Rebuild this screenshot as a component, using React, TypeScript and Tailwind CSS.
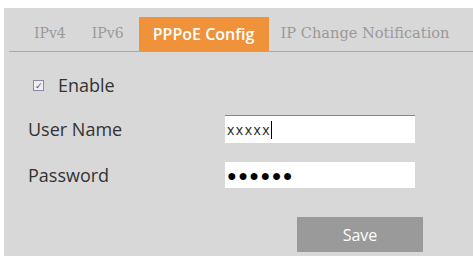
import React from 'react';

export default function App() {
  const serif = { fontFamily: '"DejaVu Serif", serif' };

  return (
    <div className="w-[473px] h-[259px] bg-white pt-[8px] pl-[4px] overflow-hidden">
      <div className="h-[248px] bg-[#d8d8d8] pt-[12px]">
        {/* Tabs */}
        <div className="ml-[5px] flex items-end h-[32px] border-b border-[#a8a8a8]">
          <div className="flex items-stretch h-[34px]">
            <div className="flex items-center ml-[25px] text-[#9a9a9a] text-[14px] pb-[2px]" style={serif}>
              IPv4
            </div>
            <div className="flex items-center ml-[26px] text-[#9a9a9a] text-[14px] pb-[2px]" style={serif}>
              IPv6
            </div>
            <div
              className="flex items-center justify-center ml-[15px] w-[130px] bg-[#f0923a] text-white text-[16px] font-semibold"
              style={{ fontFamily: '"Open Sans", sans-serif' }}
            >
              PPPoE Config
            </div>
            <div className="flex items-center ml-[12px] text-[#9a9a9a] text-[14.6px] pb-[2px]" style={serif}>
              IP Change Notification
            </div>
          </div>
        </div>

        {/* Form */}
        <div className="pl-[24px] text-[#333] text-[18px]" style={{ fontFamily: '"Open Sans", sans-serif' }}>
          <label className="flex items-center h-[24px] mt-[21px] ml-[5px]">
            <span className="w-[11px] h-[11px] border border-[#8a8aa8] bg-[#eeeef4] flex items-center justify-center text-[9px] leading-none text-[#555]">
              ✓
            </span>
            <span className="ml-[14px]">Enable</span>
          </label>

          <div className="flex items-center mt-[18px] h-[28px]">
            <span className="w-[197px]">User Name</span>
            <div className="w-[190px] h-[28px] bg-white border-t border-[#7a8a9a] flex items-center pl-[2px] text-[14px] tracking-[1.5px] text-[#222]">
              xxxxx<span className="w-[1px] h-[18px] bg-black" />
            </div>
          </div>

          <div className="flex items-center mt-[19px] h-[26px]">
            <span className="w-[197px]">Password</span>
            <div className="w-[190px] h-[26px] bg-white flex items-center pl-[2px] text-[16px] tracking-[1.5px] text-black">
              ●●●●●●
            </div>
          </div>

          <div className="flex mt-[29px] pl-[269px]">
            <button className="w-[126px] h-[35px] bg-[#9a9a9a] text-white text-[16px]">Save</button>
          </div>
        </div>
      </div>
    </div>
  );
}
